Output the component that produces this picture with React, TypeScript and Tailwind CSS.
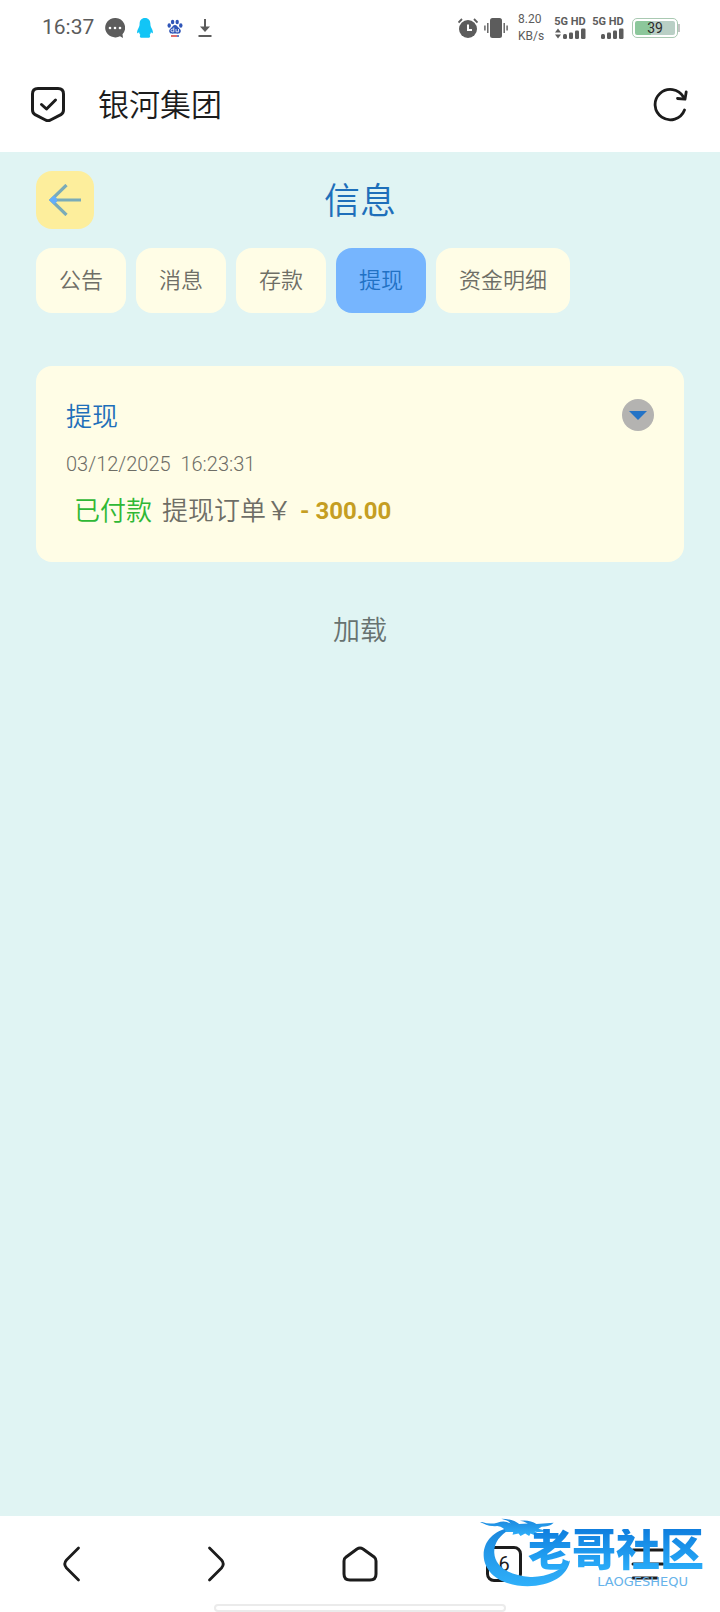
import { clsx } from "clsx";

const tabs = ["公告", "消息", "存款", "提现", "资金明细"];

const line = {
  fill: "none",
  stroke: "currentColor",
  strokeLinecap: "round",
  strokeLinejoin: "round",
} as const;

function Signal({ arrows }: { arrows?: boolean }) {
  return (
    <div className="flex flex-col items-center">
      <span className="text-[11px] leading-3 font-bold whitespace-nowrap">
        5G HD
      </span>
      <svg className="w-8 h-3" viewBox="0 0 32 12" fill="currentColor">
        {arrows && <path d="M4 0.5 7 4.5H1zM4 10.5 7 6.5H1z" />}
        <rect x="9" y="6" width="4" height="5" rx="1.5" />
        <rect x="15" y="4.5" width="4" height="6.5" rx="1.2" />
        <rect x="21" y="2.5" width="4" height="8.5" rx="1.2" />
        <rect x="27" y="0.5" width="4.5" height="10.5" rx="1.2" />
      </svg>
    </div>
  );
}

function StatusBar() {
  return (
    <div className="flex items-center justify-between h-14 pl-[42px] pr-10 text-[#5c5c5c]">
      <div className="flex items-center">
        <span className="text-[21px] mr-[11px]">16:37</span>
        <svg className="w-5 h-5 mr-3" viewBox="0 0 20 20">
          <path
            fill="currentColor"
            d="M10 0a10 9.7 0 1 0 5 18.2L18 20l-.5-3.8A9.7 9.7 0 0 0 10 0z"
          />
          <circle cx="5" cy="10" r="1.3" fill="#fff" />
          <circle cx="10" cy="10" r="1.3" fill="#fff" />
          <circle cx="15" cy="10" r="1.3" fill="#fff" />
        </svg>
        <svg className="w-4 h-5 mr-[14px]" viewBox="0 0 16 20" fill="#12c5f6">
          <path d="M8 0C4.5 0 2.6 2.6 2.6 5.8c0 2-.3 2.8-1.2 4.4C.4 12 0 13.3.1 14.6c.1 1.2 1 .6 1.9-.6.2 1.3.7 2.3 1.4 3.1-.8.5-.9 2.4.6 2.6h8c1.5-.2 1.4-2.1.6-2.6.7-.8 1.2-1.8 1.4-3.1.9 1.2 1.8 1.8 1.9.6.1-1.3-.3-2.6-1.3-4.4-.9-1.6-1.2-2.4-1.2-4.4C13.4 2.6 11.5 0 8 0z" />
        </svg>
        <svg className="w-4 h-5 mr-[15px]" viewBox="0 0 16 20">
          <g fill="#2f55b8">
            <ellipse cx="2.2" cy="7.5" rx="1.7" ry="2.2" />
            <ellipse cx="5.6" cy="4" rx="1.7" ry="2.3" />
            <ellipse cx="10.2" cy="4" rx="1.7" ry="2.3" />
            <ellipse cx="13.8" cy="7.5" rx="1.7" ry="2.2" />
            <path d="M8 7c2 0 2.7 2 4.2 3.2 1.6 1.3 2 2.7 1.3 4.1-1 1.9-3.3 1.3-5.5 1.3s-4.5.6-5.5-1.3c-.7-1.4-.3-2.8 1.3-4.1C5.3 9 6 7 8 7z" />
          </g>
          <path
            d="M6.8 9.5v4.3H5.3a1.3 1.3 0 0 1 0-2.6h1.5M9 11v2.8h2.5V11"
            fill="none"
            stroke="#fff"
            strokeWidth="0.8"
          />
          <path d="M4 18h6" stroke="#d23c3c" strokeWidth="1.5" />
          <path d="M10 18h2" stroke="#2f55b8" strokeWidth="1.5" />
        </svg>
        <svg className="w-[14px] h-5" viewBox="0 0 14 20">
          <path
            d="M7 1v9M0.5 18h13"
            fill="none"
            stroke="currentColor"
            strokeWidth="2"
          />
          <path d="M2 8.5h10L7 14z" fill="currentColor" />
        </svg>
      </div>
      <div className="flex items-center">
        <svg className="w-5 h-5 mr-[6px]" viewBox="0 0 20 20">
          <circle cx="10" cy="11" r="9" fill="currentColor" />
          <path
            d="M0.5 4.5 4 1M19.5 4.5 16 1"
            stroke="currentColor"
            strokeWidth="1.8"
          />
          <path d="M10 6.5v5.5h4" fill="none" stroke="#fff" strokeWidth="2" />
        </svg>
        <svg className="w-6 h-5 mr-[10px]" viewBox="0 0 24 20">
          <rect x="6" width="12" height="20" rx="2.5" fill="currentColor" />
          <path
            d="M3.8 5v10M0.9 7.5v5M20.2 5v10M23.1 7.5v5"
            stroke="currentColor"
            strokeWidth="1.4"
          />
        </svg>
        <div className="w-7 mr-2 text-xs leading-[17px]">
          <p>8.20</p>
          <p>KB/s</p>
        </div>
        <div className="flex gap-[6px] mr-2">
          <Signal arrows />
          <Signal />
        </div>
        <div className="flex items-center">
          <div className="flex w-[46px] h-5 p-[2px] border border-[#a9c9b2] rounded-[5px]">
            <div className="grow flex items-center justify-center rounded-xs bg-linear-to-r from-[#8cc79b] from-40% to-[#b9cfc5] to-40% text-sm text-[#2b2b2b]">
              39
            </div>
          </div>
          <div className="w-[2px] h-2 bg-[#c4c4c4]" />
        </div>
      </div>
    </div>
  );
}

function AddressBar() {
  return (
    <header className="flex items-center h-24 pl-[30px] pr-8 text-[#1c1c1c]">
      <svg className="w-9 h-9" viewBox="0 0 36 36" {...line} strokeWidth="3">
        <path d="M8 2.5h20q5.5 0 5.5 5.5v16q0 3-2.6 4.6L20.5 34Q18 35.3 15.5 34L5.1 28.6Q2.5 27 2.5 24V8Q2.5 2.5 8 2.5z" />
        <path d="m11.5 18.5 5 4.5 9-9" />
      </svg>
      <h1 className="grow ml-8 pt-1 text-[31px] font-[350]">银河集团</h1>
      <button type="button" aria-label="刷新">
        <svg className="w-9 h-9" viewBox="0 0 36 36" {...line} strokeWidth="2.8">
          <path d="M32.5 24A15.2 15.2 0 1 1 31.5 11" />
          <path d="M34.2 6 33 13.2 25.5 12.5" />
        </svg>
      </button>
    </header>
  );
}

function OrderCard() {
  return (
    <section className="flex items-start justify-between mt-[53px] px-[30px] pt-7 pb-[27px] rounded-2xl bg-[#fffde6] text-[#6e6e66]">
      <div className="leading-[47px] font-[350]">
        <h3 className="text-[26px] text-[#1e6fba]">提现</h3>
        <p className="text-[20px]">03/12/2025&nbsp; 16:23:31</p>
        <p className="flex pl-2 text-[26px]">
          <span className="text-[#2fb835]">已付款</span>
          <span className="ml-[10px]">提现订单￥</span>
          <span className="ml-2 text-[24px] font-bold text-[#c59e22]">
            - 300.00
          </span>
        </p>
      </div>
      <button
        type="button"
        aria-label="展开"
        className="flex items-center justify-center w-8 h-8 mt-[5px] rounded-full bg-[#b4b3b1]"
      >
        <svg className="w-[18px] h-[9px]" viewBox="0 0 18 9">
          <path d="M0 0h18L9 9z" fill="#2373c6" />
        </svg>
      </button>
    </section>
  );
}

function Watermark() {
  return (
    <div className="absolute right-4 -top-[2px] flex items-start pointer-events-none">
      <svg className="w-[93px] h-[75px] -mr-[45px]" viewBox="60 40 280 225">
        <defs>
          <linearGradient id="wave" x1="0" y1="0" x2="0" y2="1">
            <stop offset="0" stopColor="#1b86dc" />
            <stop offset="1" stopColor="#2fb0fa" />
          </linearGradient>
        </defs>
        <g fill="url(#wave)">
          <path d="M160 80C108 84 70 118 71 165c2 56 60 92 132 92 70 0 122-32 128-78-28 32-72 52-120 50-64-3-106-32-108-72-2-32 18-56 57-77z" />
          <path d="M66 64q24 8 46 2 22-8 40 2-4-8-28-14 36 0 54 16l26-2q-14-8-24-8 30-4 50 10l52-4q-12 12-36 12l-10 6 24 6q-16 6-36 2l24 12q-18 4-36-6l-4 8-12-8-14 8-6-8-18 4 2-8-22 0q-4-14-26-18-28 2-52-12z" />
        </g>
      </svg>
      <div className="flex flex-col items-end">
        <p className="text-[44px] leading-[44px] mt-[15px] font-black bg-linear-to-b from-[#0f7ede] to-[#2cb0fb] bg-clip-text text-transparent">
          老哥社区
        </p>
        <p className="mr-4 text-[13px] leading-[18px] font-[DejaVu_Sans,sans-serif] text-[#67b3ea]">
          LAOGESHEQU
        </p>
      </div>
    </div>
  );
}

function BottomNav() {
  return (
    <nav className="relative grid grid-cols-5 h-24 bg-white text-[#1c1c1c]">
      <button type="button" aria-label="后退" className="flex items-center justify-center">
        <svg className="w-9 h-9" viewBox="0 0 36 36" {...line} strokeWidth="2.8">
          <path d="M24.5 2 12.5 14Q9 18 12.5 22L24.5 34" />
        </svg>
      </button>
      <button type="button" aria-label="前进" className="flex items-center justify-center">
        <svg className="w-9 h-9" viewBox="0 0 36 36" {...line} strokeWidth="2.8">
          <path d="M11.5 2 23.5 14Q27 18 23.5 22L11.5 34" />
        </svg>
      </button>
      <button type="button" aria-label="主页" className="flex items-center justify-center">
        <svg className="w-9 h-9" viewBox="0 0 36 36" {...line} strokeWidth="3">
          <path d="M3.8 11.3 15 3Q18 1 21 3L32.5 11.3Q34 12.5 34 15V28q0 6-6 6H8q-6 0-6-6V15Q2 12.5 3.8 11.3z" />
        </svg>
      </button>
      <button type="button" aria-label="窗口" className="flex items-center justify-center">
        <span className="flex items-center justify-center w-9 h-9 rounded-lg border-3 border-[#1c1c1c] text-xl">
          6
        </span>
      </button>
      <button type="button" aria-label="菜单" className="flex items-center justify-center">
        <svg className="w-9 h-9" viewBox="0 0 36 36" {...line} strokeWidth="3">
          <path d="M3 4h30M3 18h30M3 32h24" />
        </svg>
      </button>
      <div className="absolute bottom-0 left-1/2 -translate-x-1/2 w-[292px] h-2 rounded-full border-2 border-[#ebebeb] bg-white" />
      <Watermark />
    </nav>
  );
}

export default function App() {
  return (
    <div className="flex flex-col min-h-screen bg-white font-[Roboto,Noto_Sans_CJK_SC,sans-serif]">
      <StatusBar />
      <AddressBar />
      <main className="grow px-9 pt-[19px] bg-[#e0f4f3]">
        <div className="grid grid-cols-[58px_1fr_58px] items-center">
          <button
            type="button"
            aria-label="返回"
            className="flex items-center justify-center h-[58px] rounded-2xl bg-[#fdee9c]"
          >
            <svg className="w-8 h-8" viewBox="0 0 32 32">
              <path
                d="M32 16H2M17.5 1 2 16l15.5 15"
                fill="none"
                stroke="#7aabb8"
                strokeWidth="3.2"
              />
              <path d="M0 16 5 11.5 8 14.5v3L5 20.5z" fill="#64aefa" />
            </svg>
          </button>
          <h2 className="pt-1 text-center text-4xl font-[350] text-[#1e6fba]">
            信息
          </h2>
        </div>
        <div className="flex gap-[10px] mt-[19px]">
          {tabs.map((tab) => (
            <button
              key={tab}
              type="button"
              className={clsx(
                "h-[65px] px-[23px] rounded-2xl text-[22px] font-[350] whitespace-nowrap",
                tab === "提现"
                  ? "bg-[#76b5fe] text-[#2171c4]"
                  : "bg-[#fffde6] text-[#6e6e66]",
              )}
            >
              {tab}
            </button>
          ))}
        </div>
        <OrderCard />
        <button
          type="button"
          className="block mx-auto mt-[49px] text-[27px] font-[350] text-[#677270]"
        >
          加载
        </button>
      </main>
      <BottomNav />
    </div>
  );
}
